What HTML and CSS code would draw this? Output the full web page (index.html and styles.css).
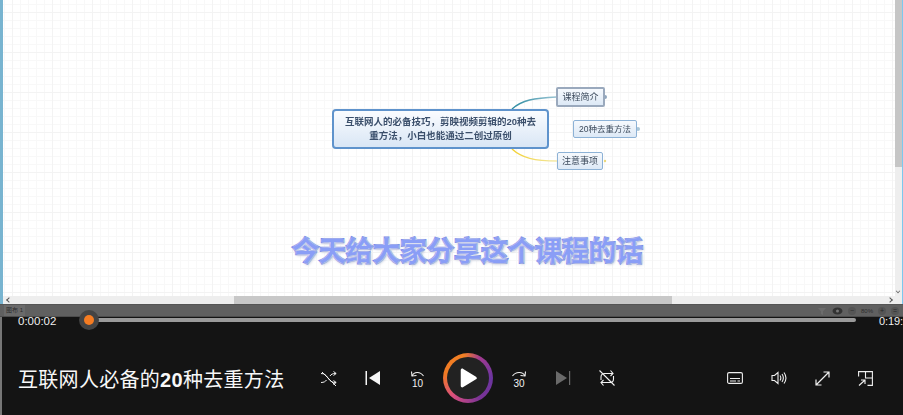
FILE: index.html
```html
<!DOCTYPE html>
<html lang="zh">
<head>
<meta charset="utf-8">
<title>互联网人必备的20种去重方法</title>
<link rel="stylesheet" href="styles.css">
</head>
<body>
<div class="app">
  <section class="video">
    <div class="canvas">
      <div class="map">
        <svg class="links" width="903" height="304" viewBox="0 0 903 304" fill="none">
          <defs>
            <linearGradient id="l1" x1="0" y1="0" x2="1" y2="0"><stop offset="0" stop-color="#2a8aa0"/><stop offset="1" stop-color="#9ac4d4"/></linearGradient>
            <linearGradient id="l2" x1="0" y1="0" x2="1" y2="0"><stop offset="0" stop-color="#2cc8cc"/><stop offset="1" stop-color="#b8e0e8"/></linearGradient>
            <linearGradient id="l3" x1="0" y1="0" x2="1" y2="0"><stop offset="0" stop-color="#f2d030"/><stop offset="1" stop-color="#f3e9a8"/></linearGradient>
          </defs>
          <path d="M512 109C522 100 534 98 557 97" stroke="url(#l1)" stroke-width="1.4"/>
          <path d="M548 129C556 129 562 129 574 129" stroke="url(#l2)" stroke-width="1.6"/>
          <path d="M512 149C522 158 534 161 558 161" stroke="url(#l3)" stroke-width="1.4"/>
          <circle cx="605" cy="97" r="2" fill="#8fa6bd"/>
          <circle cx="638" cy="129" r="2" fill="#a9c6d8"/>
          <circle cx="605" cy="161" r="1.2" fill="#ecd878"/>
        </svg>
        <div class="node node-root">互联网人的必备技巧，剪映视频剪辑的20种去重方法，小白也能通过二创过原创</div>
        <div class="node node-a">课程简介</div>
        <div class="node node-b">20种去重方法</div>
        <div class="node node-c">注意事项</div>
      </div>
      <div class="caption">今天给大家分享这个课程的话</div>
      <svg class="cursor" width="8" height="12" viewBox="0 0 8 12"><path d="M1 1v9l2-2 1.500 3 1.500-.8L4.500 7.500H7z" fill="#fff" stroke="#666" stroke-width=".8"/></svg>
      <div class="vbar">
        <div class="vthumb"></div>
        <span class="arrow-down"></span>
      </div>
      <div class="hbar">
        <span class="arrow-left"></span>
        <div class="hthumb"></div>
        <span class="arrow-right"></span>
      </div>
    </div>
    <div class="status">
      <span class="tab">图布 1</span>
      <span class="status-tools">
        <svg width="10" height="10" viewBox="0 0 10 10"><path d="M1 2h8L6 5.500V9L4 8V5.500z" fill="#6c6c6c"/></svg>
        <svg width="11" height="8" viewBox="0 0 11 8"><ellipse cx="5.500" cy="4" rx="5" ry="3.500" fill="#333"/><circle cx="5.500" cy="4" r="1.500" fill="#777"/></svg>
        <span class="dot">−</span>
        <span class="zoomtxt">80%</span>
        <span class="dot">+</span>
        <span class="dot">=</span>
      </span>
    </div>
  </section>
  <section class="player">
    <div class="timeline">
      <span class="time">0:00:02</span>
      <div class="track"><span class="knob"></span></div>
      <span class="time time-end">0:19:</span>
    </div>
    <div class="controls">
      <h1 class="title">互联网人必备的<span class="title-num">20</span>种去重方法</h1>
      <div class="main-ctrl">
        <svg class="ic" width="18" height="18" viewBox="0 0 18 18" fill="none" stroke="#f2f2f2" stroke-width="1"><path d="M1 4.500c3.500 0 5 1.500 7 4.500s3.500 4.500 8 4.500M1 13.500c3 0 4.500-1 5.500-2.500M10 7c1.200-1.800 2.500-2.500 6-2.500M13.500 2.500l2.700 2-2.700 2M13.500 11.500l2.700 2-2.700 2M2 3l14 14"/></svg>
        <svg class="ic" width="18" height="18" viewBox="0 0 18 18"><path d="M1.500 2H3v14H1.500z" fill="#f5f5f5"/><path d="M5 9l11-7v14z" fill="#f5f5f5"/></svg>
        <svg class="ic" width="18" height="20" viewBox="0 0 18 20" fill="none" stroke="#f2f2f2" stroke-width="1.100"><path d="M4 8C6 3.500 12 3 15.500 8"/><path d="M3.500 3.500L4 8l4.500-.5"/><text x="9.500" y="18.500" text-anchor="middle" class="ic-num">10</text></svg>
        <button class="play" aria-label="play"><svg width="20" height="22" viewBox="0 0 22 24"><path d="M3 3.500c0-1.500 1.500-2.300 2.800-1.500l14 8.500c1.200.8 1.200 2.300 0 3l-14 8.500C4.500 22.800 3 22 3 20.500z" fill="#fff"/></svg></button>
        <svg class="ic" width="18" height="20" viewBox="0 0 18 20" fill="none" stroke="#f2f2f2" stroke-width="1.100"><path d="M15 8C13 3.500 6 3 2.500 8"/><path d="M15.500 3.500L15 8l-4.500-.5"/><text x="9" y="18.500" text-anchor="middle" class="ic-num">30</text></svg>
        <svg class="ic" width="18" height="18" viewBox="0 0 18 18"><path d="M2 2l11 7-11 7z" fill="#6a6a6a"/><path d="M15 2h1.200v14H15z" fill="#6a6a6a"/></svg>
        <svg class="ic" width="18" height="18" viewBox="0 0 18 18" fill="none" stroke="#f2f2f2" stroke-width="1.100"><path d="M3 11V8c0-2 1.500-3.500 3.500-3.500H15M12.500 1.500L15 4.500l-2.500 2.500M15.500 7v3c0 2-1.500 3.500-3.500 3.500H3M5.500 11L3 13.500 5.500 16.500M1.500 1.500l15 15"/></svg>
      </div>
      <div class="side-ctrl">
        <svg class="ic" width="16" height="14" viewBox="0 0 16 14" fill="none" stroke="#efefef" stroke-width="1.100"><rect x=".6" y="1.600" width="14.800" height="10.800" rx="1.500"/><path d="M3 7.500h10M3 10h6M10.500 10H13"/></svg>
        <svg class="ic" width="16" height="14" viewBox="0 0 16 14" fill="none" stroke="#efefef" stroke-width="1.100"><path d="M1 4.500h2.500L7 1.500v11l-3.500-3H1zM9 4.500c1 1.500 1 3.500 0 5M11 3c1.700 2.500 1.700 5.500 0 8M13 1.500c2.500 3.500 2.500 7.500 0 11"/></svg>
        <svg class="ic" width="15" height="15" viewBox="0 0 15 15" fill="none" stroke="#efefef" stroke-width="1.200"><path d="M14 1L1 14M8.500 1H14v5.500M1 8.500V14h5.500"/></svg>
        <svg class="ic" width="15" height="15" viewBox="0 0 15 15" fill="none" stroke="#efefef" stroke-width="1.100"><path d="M.6 5.500V.6h13.800v13.800H9.500M7.500.6v6.400h7M1 14.500L6.500 9.500M3 9h4v4"/></svg>
      </div>
    </div>
  </section>
</div>
</body>
</html>
```

FILE: styles.css
```css
* { box-sizing: border-box; }
html, body { margin: 0; padding: 0; }
body {
  width: 903px;
  height: 415px;
  overflow: hidden;
  background: #141414;
  font-family: "Liberation Sans", "Noto Sans CJK SC", sans-serif;
}
.app { display: flex; flex-direction: column; width: 903px; height: 415px; }

.video { flex: none; height: 317px; display: flex; flex-direction: column; }
.canvas {
  position: relative;
  height: 304px;
  overflow: hidden;
  border-left: 3px solid #78b4d0;
  border-right: 1px solid #7cc8ee;
  background-color: #fff;
  background-image:
    linear-gradient(#f3f3f3 1px, transparent 1px),
    linear-gradient(90deg, #f3f3f3 1px, transparent 1px),
    linear-gradient(#f8f8f8 1px, transparent 1px),
    linear-gradient(90deg, #f8f8f8 1px, transparent 1px);
  background-size: 40px 40px, 40px 40px, 8px 8px, 8px 8px;
  background-position: 9px 12px, 9px 12px, 9px 4px, 9px 4px;
}
.map { position: absolute; left: -3px; top: 0; width: 903px; height: 304px; filter: blur(.55px); }
.links { position: absolute; left: 0; top: 0; }
.node {
  position: absolute;
  display: flex;
  align-items: center;
  justify-content: center;
  text-align: center;
  border: 1px solid #8db2d6;
  border-radius: 2px;
  background: linear-gradient(#f6f9fd, #dde9f6);
  color: #3c4a5c;
  font-size: 9px;
  line-height: 12px;
}
.node-root {
  left: 332px; top: 109px; width: 217px; height: 40px;
  padding: 0 10px;
  border: 2px solid #5f93cc;
  border-radius: 4px;
  background: linear-gradient(#fafcff, #d9e6f5);
  color: #3b4f6b;
  font-size: 9.500px;
  font-weight: 700;
  line-height: 14px;
}
.node-a { left: 556px; top: 87px; width: 49px; height: 20px; border: 2px solid #9aa9bd; }
.node-b { left: 573px; top: 120px; width: 64px; height: 18px; font-size: 8.500px; }
.node-c { left: 557px; top: 152px; width: 46px; height: 18px; }

.caption {
  position: absolute;
  left: 289px;
  top: 236px;
  width: 351px;
  text-align: center;
  white-space: nowrap;
  font-size: 27px;
  line-height: 32px;
  font-weight: 700;
  color: #8a9ef6;
  -webkit-text-stroke: 2px #5f76e6;
  paint-order: stroke fill;
  text-shadow: 0 0 3px #ffffff, 1px 1px 3px #aab0c8;
}
.cursor { position: absolute; left: 893px; top: 242px; }

.vbar {
  position: absolute;
  right: 0; top: 0;
  width: 7px;
  height: 296px;
  background: #eeeeee;
}
.vthumb { height: 167px; background: #c6c6c6; }
.arrow-down {
  position: absolute; left: 1px; top: 289px;
  width: 4px; height: 4px;
  border-right: 1px solid #666; border-bottom: 1px solid #666;
  transform: rotate(45deg) scale(.8);
}
.hbar {
  position: absolute;
  left: 0; right: 0; bottom: 0;
  height: 8px;
  background: #eeeeee;
}
.hthumb { position: absolute; left: 231px; top: 0; width: 438px; height: 8px; background: #c8c8c8; }
.arrow-left, .arrow-right {
  position: absolute; top: 2px;
  width: 4px; height: 4px;
  border-left: 1px solid #555; border-bottom: 1px solid #555;
}
.arrow-left { left: 4px; transform: rotate(45deg); }
.arrow-right { right: 10px; transform: rotate(-135deg); }

.status {
  flex: none;
  height: 13px;
  display: flex;
  align-items: center;
  justify-content: space-between;
  background: #606060;
  border-top: 1px solid #555;
  border-bottom: 1px solid #4c4c4c;
  padding-left: 4px;
}
.tab { font-size: 6px; color: #2e2e2e; background: #6a6a6a; padding: 0 2px; line-height: 11px; }
.status-tools { display: flex; align-items: center; gap: 5px; padding-right: 4px; }
.zoomtxt { font-size: 6px; color: #2e2e2e; }
.dot {
  width: 8px; height: 8px; border-radius: 50%;
  background: #555; color: #2a2a2a;
  font-size: 7px; line-height: 8px; text-align: center;
}

.player { flex: 1; display: flex; flex-direction: column; background: #141414; border-left: 2px solid #777; }
.timeline {
  position: relative;
  height: 8px;
  display: flex;
  align-items: flex-start;
}
.track {
  position: absolute;
  left: 88px;
  width: 766px;
  top: 1px;
  height: 4px;
  background: #9a9a9a;
  border-radius: 0 2px 2px 0;
}
.knob {
  position: absolute;
  left: -11px;
  top: -8px;
  width: 20px;
  height: 20px;
  border-radius: 50%;
  background: #444;
  display: block;
}
.knob::after {
  content: "";
  position: absolute;
  left: 5px; top: 5px;
  width: 10px; height: 10px;
  border-radius: 50%;
  background: #f57c22;
}
.time {
  position: absolute;
  left: 16px;
  top: -3px;
  font-size: 11.500px;
  line-height: 14px;
  color: #f0f0f0;
  white-space: nowrap;
}
.time-end { left: 877px; font-size: 11px; letter-spacing: -.1px; }

.controls { flex: 1; display: flex; align-items: center; padding-top: 16px; }
.title {
  margin: 0 0 0 16px;
  width: 302px;
  flex: none;
  font-size: 20px;
  letter-spacing: .3px;
  font-weight: 400;
  color: #f8f8f8;
  white-space: nowrap;
}
.title-num { font-weight: 700; }
.main-ctrl { display: flex; align-items: center; gap: 26px; flex: none; width: 407px; }
.side-ctrl { display: flex; align-items: center; gap: 28px; }
.ic { flex: none; display: block; }
.ic-num { font-size: 10px; fill: #f2f2f2; stroke: none; font-family: "Liberation Sans", sans-serif; }
.play {
  flex: none;
  width: 50px;
  height: 50px;
  margin: 0 -9px;
  padding: 0;
  border-radius: 50%;
  display: flex;
  align-items: center;
  justify-content: center;
  background:
    linear-gradient(#222, #222) padding-box,
    conic-gradient(from 30deg, #a23a90, #6b35a0 60deg, #7a3396 120deg, #d94f7e 190deg, #f07a24 250deg, #f28024 320deg, #a23a90) border-box;
  border: 4px solid transparent;
}
```
